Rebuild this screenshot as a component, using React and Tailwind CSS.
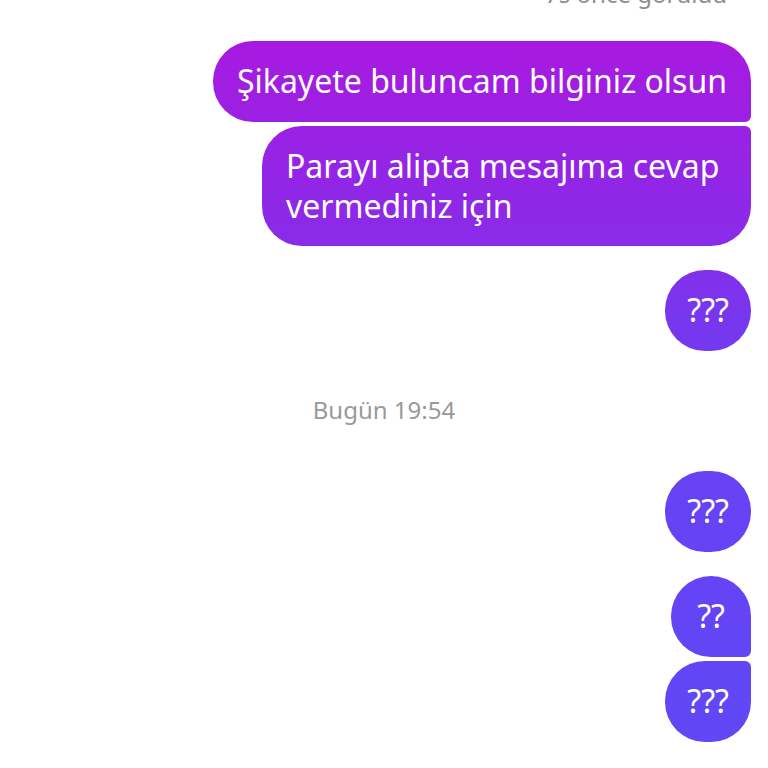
import React from "react";

const grad =
  "bg-[linear-gradient(180deg,#b015df_0px,#a01ee2_90px,#8b2ae8_230px,#7737ee_320px,#6643f4_500px,#5f48f6_768px)] bg-fixed";

const Bubble = ({ children, className = "" }) => (
  <div
    className={`${grad} text-white text-[32px] leading-[40px] py-[20px] px-6 ${className}`}
  >
    {children}
  </div>
);

const App = () => {
  return (
    <div
      className="w-[768px] h-[768px] overflow-hidden bg-white pr-[17px] flex flex-col items-end"
      style={{ fontFamily: '"Noto Sans", "Open Sans", sans-serif' }}
    >
      <div className="-mt-[21px] h-[30px] leading-[30px] text-[24px] text-[#8e8e8e] pr-6">
        7s önce görüldü
      </div>

      <Bubble className="mt-[32px] h-[81px] rounded-[40px] rounded-br-[6px]">
        Şikayete buluncam bilginiz olsun
      </Bubble>
      <Bubble className="mt-1 w-[489px] rounded-[40px] rounded-tr-[6px]">
        Parayı alipta mesajıma cevap vermediniz için
      </Bubble>
      <Bubble className="mt-6 h-[81px] min-w-[79px] px-[22px] text-center rounded-[40px]">
        ???
      </Bubble>

      <div className="self-stretch pl-[17px] mt-[44px] mb-[46px] h-[30px] leading-[30px] text-center text-[24px] text-[#999999]">
        Bugün 19:54
      </div>

      <Bubble className="h-[81px] min-w-[79px] px-[22px] text-center rounded-[40px]">
        ???
      </Bubble>
      <Bubble className="mt-6 h-[81px] min-w-[79px] px-[26px] text-center rounded-[40px] rounded-br-[6px]">
        ??
      </Bubble>
      <Bubble className="mt-1 h-[81px] min-w-[79px] px-[22px] text-center rounded-[40px] rounded-tr-[6px]">
        ???
      </Bubble>
    </div>
  );
};

export default App;
